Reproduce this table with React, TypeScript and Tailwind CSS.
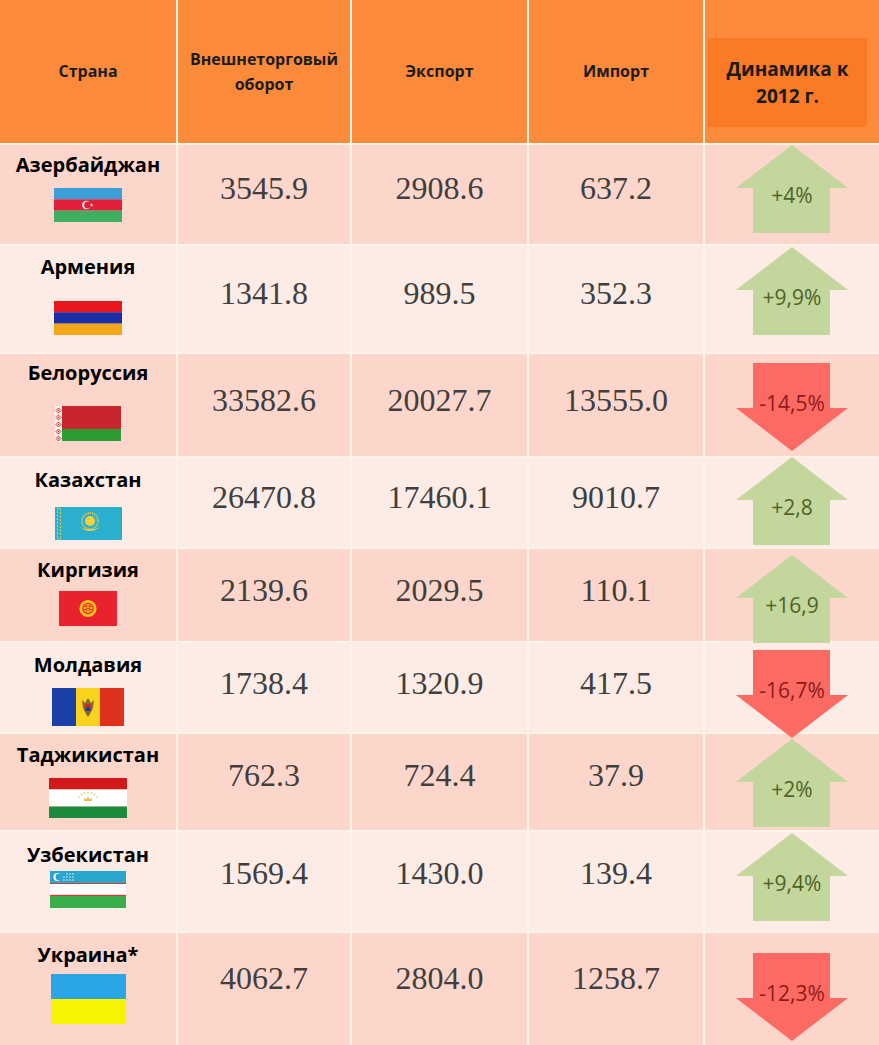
import React from "react";

const DARK = "bg-[#fdd6cb]";
const LIGHT = "bg-[#fdebe6]";

function AzFlag() {
  return (
    <svg width="68" height="34" viewBox="0 0 68 34">
      <rect width="68" height="11.4" fill="#3b9fd8" />
      <rect y="11.3" width="68" height="11.4" fill="#e3203a" />
      <rect y="22.6" width="68" height="11.4" fill="#3fae5e" />
      <circle cx="32.4" cy="17" r="4.2" fill="#fff" />
      <circle cx="33.5" cy="17" r="3.4" fill="#e3203a" />
      <polygon points="37.6,15.3 38,16.5 39.3,16.5 38.3,17.3 38.7,18.6 37.6,17.8 36.5,18.6 36.9,17.3 35.9,16.5 37.2,16.5" fill="#fff" />
    </svg>
  );
}

function ArFlag() {
  return (
    <svg width="68" height="34" viewBox="0 0 68 34">
      <rect width="68" height="11.4" fill="#e8161f" />
      <rect y="11.3" width="68" height="11.4" fill="#1c2ea6" />
      <rect y="22.6" width="68" height="11.4" fill="#f3a61a" />
    </svg>
  );
}

function ByFlag() {
  const ys = [2, 9, 16, 23, 30];
  return (
    <svg width="66" height="35" viewBox="0 0 66 35">
      <rect width="7" height="35" fill="#f7efe9" />
      {ys.map((y) => (
        <g key={y}>
          <polygon points={`3.5,${y} 6,${y + 2.5} 3.5,${y + 5} 1,${y + 2.5}`} fill="none" stroke="#c8262c" strokeWidth="0.9" />
          <circle cx="3.5" cy={y + 2.5} r="0.8" fill="#c8262c" />
        </g>
      ))}
      <rect x="7" width="59" height="23" fill="#c8262c" />
      <rect x="7" y="23" width="59" height="12" fill="#2e9a32" />
    </svg>
  );
}

function KzFlag() {
  return (
    <svg width="67" height="33" viewBox="0 0 67 33">
      <rect width="67" height="33" fill="#2aafcf" />
      <rect x="2.5" y="1" width="3" height="31" fill="none" stroke="#f2cf3b" strokeWidth="1" strokeDasharray="2 1.5" />
      <circle cx="35" cy="14" r="8" fill="none" stroke="#f6d23a" strokeWidth="2" strokeDasharray="1 1.2" />
      <circle cx="35" cy="14" r="5" fill="#f6d23a" />
      <path d="M25 20 Q35 28 45 20 Q35 25 25 20 Z" fill="#f6d23a" />
    </svg>
  );
}

function KgFlag() {
  return (
    <svg width="58" height="35" viewBox="0 0 58 35">
      <rect width="58" height="35" fill="#e8232d" />
      <circle cx="29" cy="17.5" r="8.6" fill="#f8c21a" />
      <circle cx="29" cy="17.5" r="5.8" fill="#e8232d" />
      <circle cx="29" cy="17.5" r="4.6" fill="#f8c21a" />
      <path d="M25 16 Q29 13 33 16 M25 19 Q29 16 33 19 M27 14 Q29 18 27 21.5 M31 14 Q29 18 31 21.5" fill="none" stroke="#e8232d" strokeWidth="0.9" />
    </svg>
  );
}

function MdFlag() {
  return (
    <svg width="72" height="38" viewBox="0 0 72 38">
      <rect width="24" height="38" fill="#1a3fa8" />
      <rect x="24" width="24" height="38" fill="#f8d21c" />
      <rect x="48" width="24" height="38" fill="#e0301e" />
      <path d="M30 12 L33 15 L36 10 L39 15 L42 12 L41 20 L38 26 L36 29 L34 26 L31 20 Z" fill="#8a6a2a" />
      <rect x="33.5" y="16" width="5" height="7" fill="#c8262c" />
      <rect x="33.5" y="19.5" width="5" height="3.5" fill="#1a3fa8" />
    </svg>
  );
}

function TjFlag() {
  return (
    <svg width="78" height="40" viewBox="0 0 78 40">
      <rect width="78" height="11.5" fill="#d21a1a" />
      <rect y="11.5" width="78" height="17" fill="#fff" />
      <rect y="28.5" width="78" height="11.5" fill="#1e8a3c" />
      <path d="M35 23 L35 20 L37 21.5 L39 19 L41 21.5 L43 20 L43 23 Z" fill="#e2bb4a" />
      {[30, 32.5, 35.5, 39, 42.5, 45.5, 48].map((x, i) => (
        <circle key={x} cx={x} cy={[19, 16.5, 15, 14.5, 15, 16.5, 19][i]} r="0.8" fill="#e2bb4a" />
      ))}
    </svg>
  );
}

function UzFlag() {
  const dots: [number, number][] = [];
  [17, 20, 23].forEach((x) => [3, 6, 9].forEach((y) => dots.push([x, y])));
  [14].forEach((x) => [6, 9].forEach((y) => dots.push([x, y])));
  return (
    <svg width="76" height="37" viewBox="0 0 76 37">
      <rect width="76" height="12" fill="#2aa6cc" />
      <rect y="12" width="76" height="1.2" fill="#d83a3a" />
      <rect y="13.2" width="76" height="10.6" fill="#fff" />
      <rect y="23.8" width="76" height="1.2" fill="#d83a3a" />
      <rect y="25" width="76" height="12" fill="#3aae4a" />
      <circle cx="7.5" cy="6" r="4" fill="#fff" />
      <circle cx="9" cy="6" r="3.4" fill="#2aa6cc" />
      {dots.map(([x, y]) => (
        <circle key={`${x}-${y}`} cx={x} cy={y} r="0.7" fill="#fff" />
      ))}
    </svg>
  );
}

function UaFlag() {
  return (
    <svg width="75" height="50" viewBox="0 0 75 50">
      <rect width="75" height="25" fill="#2aa6e6" />
      <rect y="25" width="75" height="25" fill="#f8f300" />
    </svg>
  );
}

function Arrow({ up, label, top }: { up: boolean; label: string; top: string }) {
  return (
    <div className={`absolute left-1/2 -translate-x-1/2 z-10 w-[112px] h-[88px] ${top}`}>
      <svg className="absolute inset-0" width="112" height="88" viewBox="0 0 112 88">
        {up ? (
          <polygon points="56,0 112,43 94,43 94,88 17,88 17,43 0,43" fill="#c3d69b" />
        ) : (
          <polygon points="17,0 94,0 94,45 112,45 56,88 0,45 17,45" fill="#fc6a63" />
        )}
      </svg>
      <span
        className={`absolute inset-x-0 text-center font-['Open_Sans',sans-serif] text-[21px] leading-[28px] ${
          up ? "top-[36px] text-[#4f6228]" : "top-[26px] text-[#8e1b1b]"
        }`}
      >
        {label}
      </span>
    </div>
  );
}

const rows = [
  { name: "Азербайджан", flag: <AzFlag />, v: ["3545.9", "2908.6", "637.2"], d: "+4%", up: true, h: "h-[99px]", bg: DARK, namePt: "pt-[7px]", flagMt: "mt-[10px]", numPt: "pt-[25px]", top: "top-0" },
  { name: "Армения", flag: <ArFlag />, v: ["1341.8", "989.5", "352.3"], d: "+9,9%", up: true, h: "h-[106px]", bg: LIGHT, namePt: "pt-[8px]", flagMt: "mt-[21px]", numPt: "pt-[29px]", top: "top-[1px]" },
  { name: "Белоруссия", flag: <ByFlag />, v: ["33582.6", "20027.7", "13555.0"], d: "-14,5%", up: false, h: "h-[102px]", bg: DARK, namePt: "pt-[6px]", flagMt: "mt-[20px]", numPt: "pt-[28px]", top: "top-[9px]" },
  { name: "Казахстан", flag: <KzFlag />, v: ["26470.8", "17460.1", "9010.7"], d: "+2,8", up: true, h: "h-[89px]", bg: LIGHT, namePt: "pt-[9px]", flagMt: "mt-[14px]", numPt: "pt-[21px]", top: "-top-[1px]" },
  { name: "Киргизия", flag: <KgFlag />, v: ["2139.6", "2029.5", "110.1"], d: "+16,9", up: true, h: "h-[92px]", bg: DARK, namePt: "pt-[8px]", flagMt: "mt-[8px]", numPt: "pt-[23px]", top: "top-[6px]" },
  { name: "Молдавия", flag: <MdFlag />, v: ["1738.4", "1320.9", "417.5"], d: "-16,7%", up: false, h: "h-[89px]", bg: LIGHT, namePt: "pt-[9px]", flagMt: "mt-[10px]", numPt: "pt-[22px]", top: "top-[7px]" },
  { name: "Таджикистан", flag: <TjFlag />, v: ["762.3", "724.4", "37.9"], d: "+2%", up: true, h: "h-[96px]", bg: DARK, namePt: "pt-[8px]", flagMt: "mt-[10px]", numPt: "pt-[23px]", top: "top-[5px]" },
  { name: "Узбекистан", flag: <UzFlag />, v: ["1569.4", "1430.0", "139.4"], d: "+9,4%", up: true, h: "h-[99px]", bg: LIGHT, namePt: "pt-[10px]", flagMt: "mt-[3px]", numPt: "pt-[23px]", top: "top-[1px]" },
  { name: "Украина*", flag: <UaFlag />, v: ["4062.7", "2804.0", "1258.7"], d: "-12,3%", up: false, h: "h-[112px]", bg: DARK, namePt: "pt-[9px]", flagMt: "mt-[6px]", numPt: "pt-[27px]", top: "top-[20px]" },
];

const head = "flex items-center justify-center text-center bg-[#fb8a3b] font-['Open_Sans',sans-serif] font-bold text-[16px] leading-[25px] text-[#1c1c1c]";
const grid = "grid grid-cols-[176px_172px_175px_174px_1fr] gap-[2px]";

export default function App() {
  return (
    <div className="w-[879px] h-[1045px] overflow-hidden flex flex-col gap-[2px] bg-[#fdf3e7]">
      <div className={`${grid} h-[143px]`}>
        <div className={head}>Страна</div>
        <div className={head}>
          Внешнеторговый
          <br />
          оборот
        </div>
        <div className={head}>Экспорт</div>
        <div className={head}>Импорт</div>
        <div className="bg-[#fb8a3b] pt-[38px] pl-[3px] pr-[12px]">
          <div className="h-[89px] bg-[#fa7a25] flex items-center justify-center text-center font-['Open_Sans',sans-serif] font-bold text-[19px] leading-[27px] text-[#1a1a1a]">
            Динамика к
            <br />
            2012 г.
          </div>
        </div>
      </div>
      {rows.map((r) => (
        <div key={r.name} className={`${grid} ${r.h}`}>
          <div className={`${r.bg} flex flex-col items-center ${r.namePt}`}>
            <div className="font-['Open_Sans',sans-serif] font-bold text-[20px] leading-[26px] text-black">{r.name}</div>
            <div className={`${r.flagMt} flex`}>{r.flag}</div>
          </div>
          {r.v.map((n, i) => (
            <div key={i} className={`${r.bg} flex justify-center ${r.numPt}`}>
              <span className="font-['Liberation_Serif',serif] text-[32px] leading-[36px] text-[#3f3f3f]">{n}</span>
            </div>
          ))}
          <div className={`${r.bg} relative`}>
            <Arrow up={r.up} label={r.d} top={r.top} />
          </div>
        </div>
      ))}
    </div>
  );
}
